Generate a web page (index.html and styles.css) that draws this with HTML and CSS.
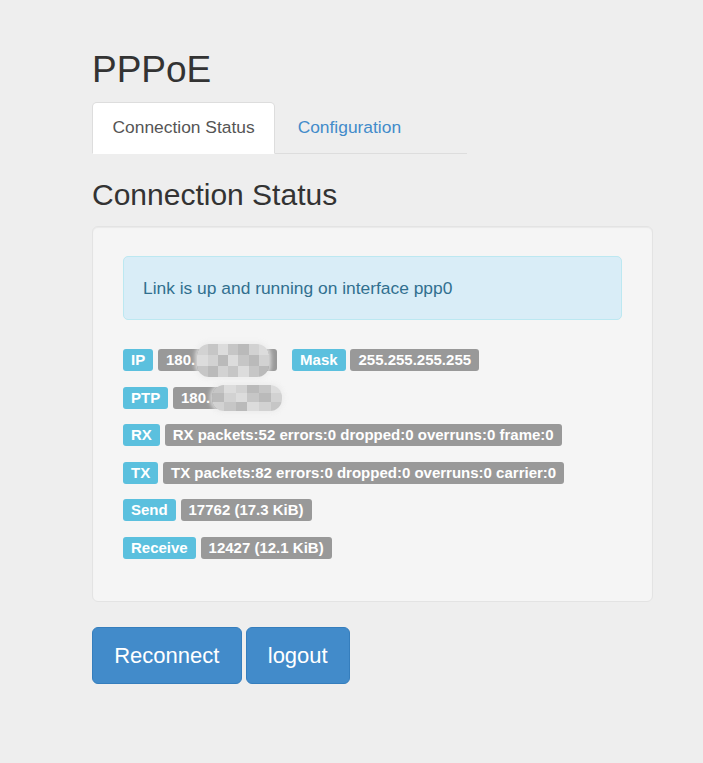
FILE: index.html
```html
<!DOCTYPE html>
<html lang="en">
<head>
    <meta charset="UTF-8">
    <meta name="viewport" content="width=device-width, initial-scale=1.0">
    <title>PPPoE</title>
    <link rel="stylesheet" href="styles.css">
</head>
<body>
    <div class="container">
        <h2 class="page-title">PPPoE</h2>

        <ul class="nav-tabs">
            <li class="active"><a href="#">Connection Status</a></li>
            <li><a href="#">Configuration</a></li>
        </ul>

        <h3>Connection Status</h3>

        <div class="well">
            <div class="alert">Link is up and running on interface ppp0</div>

            <p class="stat">
                <span class="label label-info">IP</span>
                <span class="label label-default">180.<span class="redact"><span class="mosaic">
                    <i class="c1"></i><i class="c2"></i><i class="c3"></i><i class="c2"></i><i class="c4"></i><i class="c1"></i><i class="c3"></i>
                    <i class="c3"></i><i class="c1"></i><i class="c4"></i><i class="c3"></i><i class="c2"></i><i class="c4"></i><i class="c1"></i>
                    <i class="c2"></i><i class="c4"></i><i class="c1"></i><i class="c2"></i><i class="c3"></i><i class="c2"></i><i class="c4"></i>
                </span></span></span>
                <span class="label label-info spaced">Mask</span>
                <span class="label label-default">255.255.255.255</span>
            </p>
            <p class="stat">
                <span class="label label-info">PTP</span>
                <span class="label label-default">180.<span class="redact short"><span class="mosaic">
                    <i class="c2"></i><i class="c3"></i><i class="c1"></i><i class="c4"></i><i class="c2"></i><i class="c3"></i>
                    <i class="c4"></i><i class="c1"></i><i class="c3"></i><i class="c2"></i><i class="c4"></i><i class="c1"></i>
                    <i class="c1"></i><i class="c2"></i><i class="c4"></i><i class="c3"></i><i class="c1"></i><i class="c2"></i>
                </span></span></span>
            </p>
            <p class="stat">
                <span class="label label-info">RX</span>
                <span class="label label-default">RX packets:52 errors:0 dropped:0 overruns:0 frame:0</span>
            </p>
            <p class="stat">
                <span class="label label-info">TX</span>
                <span class="label label-default">TX packets:82 errors:0 dropped:0 overruns:0 carrier:0</span>
            </p>
            <p class="stat">
                <span class="label label-info">Send</span>
                <span class="label label-default">17762 (17.3 KiB)</span>
            </p>
            <p class="stat">
                <span class="label label-info">Receive</span>
                <span class="label label-default">12427 (12.1 KiB)</span>
            </p>
        </div>

        <div class="actions">
            <button class="btn">Reconnect</button>
            <button class="btn">logout</button>
        </div>
    </div>
</body>
</html>
```

FILE: styles.css
```css
body {
    font-family: "Liberation Sans", Arial, sans-serif;
    font-size: 17.4px;
    line-height: 25px;
    background-color: #eeeeee;
    margin: 0;
    color: #333;
}

.container {
    width: 561px;
    margin-left: 92px;
    padding-top: 50px;
}

.page-title {
    font-size: 37px;
    font-weight: normal;
    line-height: 1.1;
    margin: 0 0 11px;
}

h3 {
    font-size: 30px;
    font-weight: normal;
    line-height: 1.1;
    margin: 24px 0 15px;
}

.nav-tabs {
    list-style: none;
    margin: 0;
    padding: 0;
    width: 375px;
    display: flex;
    border-bottom: 1px solid #ddd;
}

.nav-tabs li {
    margin-bottom: -1px;
    margin-right: 2px;
}

.nav-tabs a {
    display: block;
    padding: 12.4px 19.5px 13.4px;
    border: 1px solid transparent;
    border-radius: 5px 5px 0 0;
    color: #428bca;
    text-decoration: none;
}

.nav-tabs .active a {
    color: #555;
    background-color: #fff;
    border-color: #ddd #ddd transparent;
}

.well {
    background-color: #f5f5f5;
    border: 1px solid #e3e3e3;
    border-radius: 6px;
    padding: 29px 30px 28px;
    box-shadow: inset 0 1px 1px rgba(0, 0, 0, 0.05);
}

.alert {
    background-color: #d9edf7;
    border: 1px solid #bce8f1;
    border-radius: 5px;
    color: #31708f;
    padding: 18.5px 19px;
    margin-bottom: 26.5px;
}

.stat {
    margin: 0 0 12.6px;
}

.label {
    font-size: 15px;
    font-weight: bold;
    line-height: 1;
    color: #fff;
    padding: 2px 8px 3px;
    border-radius: 3px;
    white-space: nowrap;
}

.label-info {
    background-color: #5bc0de;
}

.label-default {
    background-color: #999;
}

.spaced {
    margin-left: 10px;
}

.redact {
    display: inline-block;
    position: relative;
    width: 74px;
    height: 14px;
    vertical-align: -2px;
}

.redact.short {
    width: 58px;
}

.mosaic {
    position: absolute;
    left: 2px;
    right: 0;
    top: -9px;
    bottom: -10px;
    display: grid;
    grid-template-columns: repeat(7, 1fr);
    border-radius: 12px;
    overflow: hidden;
    box-shadow: 0 0 4px 2px rgba(235, 235, 235, 0.8);
}

.redact.short .mosaic {
    grid-template-columns: repeat(6, 1fr);
    right: -14px;
    top: -6px;
    bottom: -6px;
}

.mosaic .c1 { background: #d2d2d2; }
.mosaic .c2 { background: #c6c6c6; }
.mosaic .c3 { background: #dcdcdc; }
.mosaic .c4 { background: #bababa; }

.actions {
    display: flex;
    gap: 4px;
    margin-top: 25px;
}

.btn {
    font-family: inherit;
    font-size: 22px;
    line-height: 29px;
    padding: 13px 21.2px;
    color: #fff;
    background-color: #428bca;
    border: 1px solid #357ebd;
    border-radius: 6px;
    cursor: pointer;
}

.btn:hover {
    background-color: #3276b1;
}
```
